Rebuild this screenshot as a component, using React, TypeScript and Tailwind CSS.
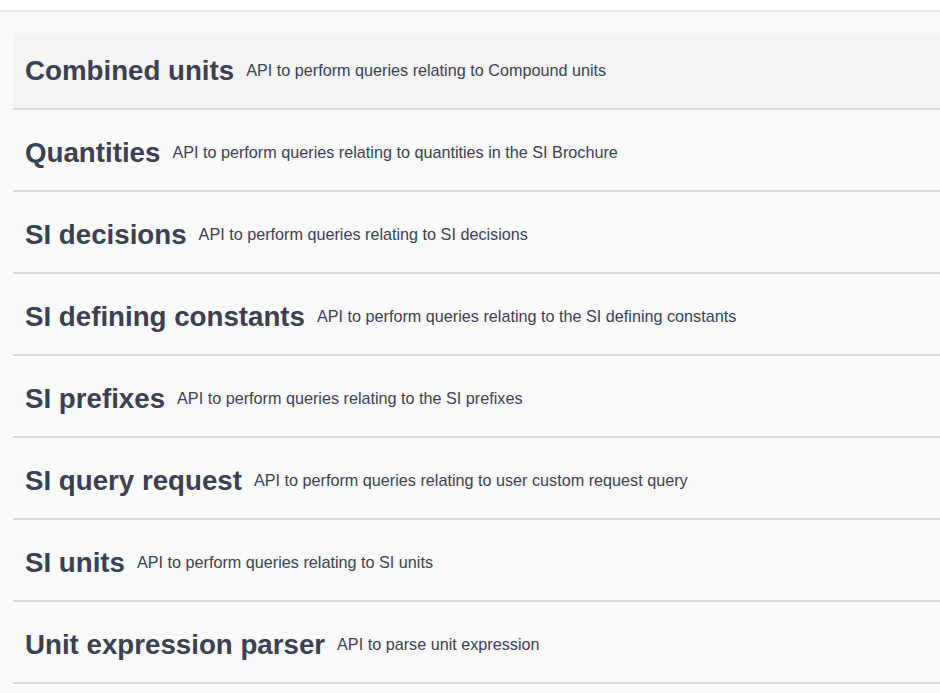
import React from "react";

interface Tag {
  name: string;
  description: string;
}

const tags: Tag[] = [
  { name: "Combined units", description: "API to perform queries relating to Compound units" },
  { name: "Quantities", description: "API to perform queries relating to quantities in the SI Brochure" },
  { name: "SI decisions", description: "API to perform queries relating to SI decisions" },
  { name: "SI defining constants", description: "API to perform queries relating to the SI defining constants" },
  { name: "SI prefixes", description: "API to perform queries relating to the SI prefixes" },
  { name: "SI query request", description: "API to perform queries relating to user custom request query" },
  { name: "SI units", description: "API to perform queries relating to SI units" },
  { name: "Unit expression parser", description: "API to parse unit expression" },
];

function TagRow({ tag, hovered }: { tag: Tag; hovered?: boolean }) {
  return (
    <h3
      className={
        "flex items-center h-[77px] mb-[5px] pl-3 border-b-2 border-[#d8d8d8] text-[#3b4151] cursor-pointer " +
        (hovered ? "bg-[#f4f4f4]" : "")
      }
    >
      <span className="text-[27.7px] font-bold leading-none whitespace-nowrap">{tag.name}</span>
      <small className="ml-3 text-[16.2px] leading-none whitespace-nowrap">{tag.description}</small>
    </h3>
  );
}

export default function App() {
  return (
    <div className="min-h-screen bg-[#fafafa] overflow-hidden" style={{ fontFamily: '"Liberation Sans", Arial, sans-serif' }}>
      {/* top bar edge */}
      <div className="h-[10px] bg-white" />
      <div className="border-t-2 border-[#e9e9e9] pl-[13px] pt-[21px]">
        {tags.map((tag, i) => (
          <TagRow key={tag.name} tag={tag} hovered={i === 0} />
        ))}
      </div>
    </div>
  );
}
